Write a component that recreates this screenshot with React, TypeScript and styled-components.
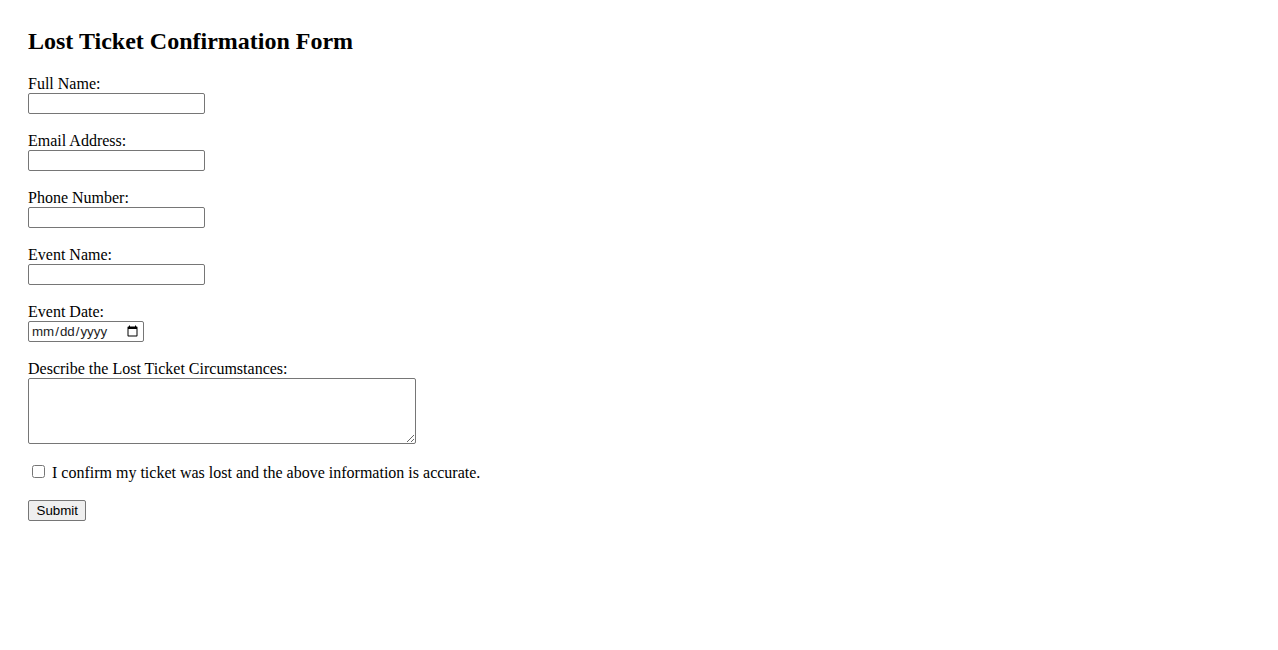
import React from 'react';
import styled, { createGlobalStyle } from 'styled-components';

const GlobalStyle = createGlobalStyle`
  html, body {
    margin: 0;
    padding: 0;
    background: #fff;
  }
`;

const Page = styled.div`
  padding: 28px;
  font-family: "Liberation Serif", "Times New Roman", serif;
  font-size: 16px;
  color: #000;
`;

const Title = styled.h2`
  margin: 0 0 0.83em;
  font-size: 24px;
  font-weight: bold;
`;

const Field = styled.div`
  margin-bottom: 18px;
`;

const Label = styled.label`
  display: block;
  line-height: 18px;
`;

const controlBase = `
  display: block;
  box-sizing: border-box;
  margin: 0;
  border: 1px solid #767676;
  border-radius: 2px;
  background: #fff;
  color: #000;
`;

const TextInput = styled.input`
  ${controlBase}
  width: 177px;
  height: 21px;
  padding: 1px 2px;
  font: 13.33px "Liberation Sans", Arial, sans-serif;
`;

const DateInput = styled.input`
  ${controlBase}
  width: 116px;
  height: 21px;
  padding: 1px 2px;
  font: 13.33px "Liberation Sans", Arial, sans-serif;
  color: #222;
`;

const TextArea = styled.textarea`
  ${controlBase}
  width: 388px;
  height: 66px;
  padding: 2px;
  resize: both;
  font: 13.33px "Liberation Mono", monospace;
`;

const CheckRow = styled.div`
  margin: 4px 0 18px;
  line-height: 18px;
`;

const Checkbox = styled.input`
  width: 13px;
  height: 13px;
  margin: 3px 3px 3px 4px;
  vertical-align: 0;
`;

const SubmitButton = styled.button`
  box-sizing: border-box;
  height: 21px;
  padding: 1px 7.5px;
  border: 1px solid #767676;
  border-radius: 2px;
  background: #efefef;
  color: #000;
  font: 13.33px "Liberation Sans", Arial, sans-serif;
`;

const fields = [
  { id: 'name', label: 'Full Name:', type: 'text' },
  { id: 'email', label: 'Email Address:', type: 'email' },
  { id: 'phone', label: 'Phone Number:', type: 'tel' },
  { id: 'event', label: 'Event Name:', type: 'text' },
];

export default function App() {
  return (
    <>
      <GlobalStyle />
      <Page>
        <Title>Lost Ticket Confirmation Form</Title>
        <form onSubmit={e => e.preventDefault()}>
          {fields.map(f => (
            <Field key={f.id}>
              <Label htmlFor={f.id}>{f.label}</Label>
              <TextInput id={f.id} type={f.type} />
            </Field>
          ))}

          <Field>
            <Label htmlFor="date">Event Date:</Label>
            <DateInput id="date" type="date" />
          </Field>

          <Field>
            <Label htmlFor="details">Describe the Lost Ticket Circumstances:</Label>
            <TextArea id="details" />
          </Field>

          <CheckRow>
            <Checkbox id="confirm" type="checkbox" />{' '}
            <label htmlFor="confirm">I confirm my ticket was lost and the above information is accurate.</label>
          </CheckRow>

          <SubmitButton type="submit">Submit</SubmitButton>
        </form>
      </Page>
    </>
  );
}
